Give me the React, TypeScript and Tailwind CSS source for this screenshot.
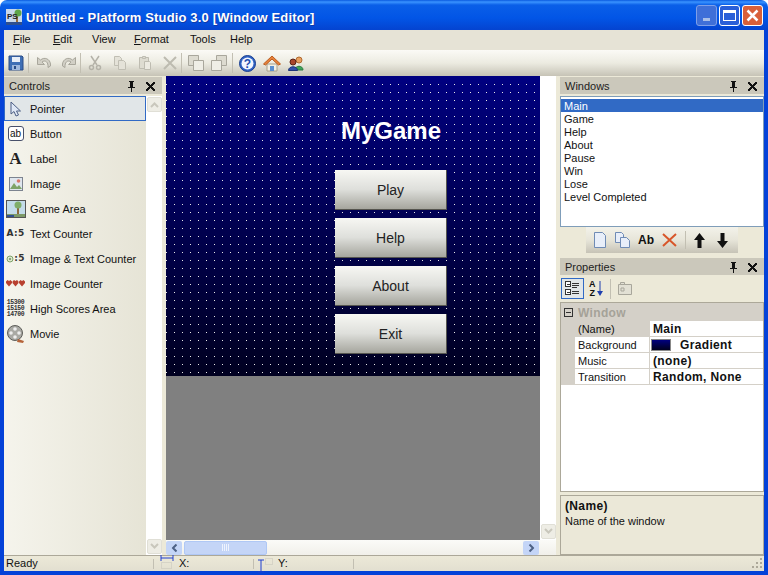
import type { ReactNode } from 'react'

function Svg({ w = 16, h = 16, children }: { w?: number; h?: number; children: ReactNode }) {
  return (
    <svg width={w} height={h} viewBox={`0 0 ${w} ${h}`} className="shrink-0" shapeRendering="crispEdges">
      {children}
    </svg>
  )
}

function PinIcon() {
  return (
    <Svg w={9} h={11}>
      <path d="M2 0h5v1H6v5h2v1H1V6h2V1H2zM4 7h1v4H4z" fill="#111" />
      <path d="M5 1h1v5H5z" fill="#111" />
    </Svg>
  )
}

function CloseIcon() {
  return (
    <Svg w={9} h={9}>
      <path d="M0 0h2l2.500 3L7 0h2v1L6 4.500 9 8v1H7L4.500 6 2 9H0V8l3-3.500L0 1z" fill="#111" />
    </Svg>
  )
}

function PanelHeader({ title }: { title: string }) {
  return (
    <div className="flex h-[17px] items-center bg-[#cbc8bb] pl-[5px] pr-[7px] pt-px text-[#222]">
      <span className="flex-1">{title}</span>
      <span className="mr-[10px]"><PinIcon /></span>
      <CloseIcon />
    </div>
  )
}

function SaveIcon() {
  return (
    <svg width="16" height="16" viewBox="0 0 16 16">
      <path d="M1 1h13l1 1v13H1z" fill="#3f6fb5" stroke="#2a4c86" />
      <rect x="4" y="2" width="8" height="5" fill="#e8eef7" />
      <rect x="4" y="10" width="8" height="5" fill="#9fb8dc" />
      <rect x="6" y="11" width="2" height="3" fill="#2a4c86" />
    </svg>
  )
}

function UndoIcon({ flip }: { flip?: boolean }) {
  return (
    <svg width="16" height="16" viewBox="0 0 16 16" className={flip ? '-scale-x-100' : ''}>
      <path d="M1.500 2.500v7h7L6 7c2.500-2 5.500-1 6 3.500v2l2.500-1.500V9C14 4 8.500 1.500 4.500 5z" fill="#d2d0c6" stroke="#a9a79c" />
    </svg>
  )
}

function CutIcon() {
  return (
    <svg width="16" height="16" viewBox="0 0 16 16" fill="none" stroke="#b4b2a8" strokeWidth="1.500">
      <path d="M4 1l6 9M12 1L6 10" />
      <circle cx="4.500" cy="12.500" r="2" />
      <circle cx="11.500" cy="12.500" r="2" />
    </svg>
  )
}

function CopyIcon() {
  return (
    <svg width="16" height="16" viewBox="0 0 16 16" fill="#e4e2d8" stroke="#c0beb3">
      <path d="M2.500 1.500h5l2 2v7h-7z" />
      <path d="M6.500 5.500h5l2 2v7h-7z" />
    </svg>
  )
}

function PasteIcon() {
  return (
    <svg width="16" height="16" viewBox="0 0 16 16" fill="#dedcd1" stroke="#bebcb1">
      <path d="M2.500 2.500h9v11h-9z" />
      <path d="M5.500 1.500h3v2h-3z" />
      <path d="M7.500 6.500h5l1 1v7h-6z" fill="#eceae1" />
    </svg>
  )
}

function CrossGrayIcon() {
  return (
    <svg width="16" height="16" viewBox="0 0 16 16" stroke="#bdbbb0" strokeWidth="2">
      <path d="M2 2l12 12M14 2L2 14" />
    </svg>
  )
}

function StackIcon({ flip }: { flip?: boolean }) {
  return (
    <svg width="18" height="18" viewBox="0 0 18 18" className={flip ? '-scale-x-100' : ''} stroke="#a9a79c">
      <path d="M1.500 1.500h10v10h-10z" fill="#dddbd0" />
      <path d="M6.500 6.500h10v10h-10z" fill="#efeee6" />
    </svg>
  )
}

function HelpIcon() {
  return (
    <svg width="17" height="17" viewBox="0 0 17 17">
      <circle cx="8.500" cy="8.500" r="8" fill="#2f62c4" stroke="#1b3f8f" />
      <circle cx="8.500" cy="8.500" r="6" fill="#f2f6ff" />
      <text x="8.500" y="13" textAnchor="middle" fontSize="12" fontWeight="700" fill="#1f4fb0" fontFamily="'Liberation Sans',sans-serif">?</text>
    </svg>
  )
}

function HomeIcon() {
  return (
    <svg width="18" height="17" viewBox="0 0 18 17">
      <path d="M4 9h10v7H4z" fill="#f2f0e6" stroke="#a8a08a" />
      <path d="M0.500 9L9 1l8.500 8-2 1L9 4l-6.500 6z" fill="#e8823a" stroke="#b95c20" />
      <path d="M7 11h4v5H7z" fill="#5a8fd0" />
    </svg>
  )
}

function UsersIcon() {
  return (
    <svg width="16" height="15" viewBox="0 0 16 15">
      <circle cx="11" cy="4" r="3" fill="#e8a060" stroke="#b06a30" />
      <path d="M7 14c0-5 8-5 8 0z" fill="#3fa35a" stroke="#2a7a40" />
      <circle cx="5" cy="6" r="3" fill="#a8452c" stroke="#5b2418" />
      <path d="M0.500 14.500c0-5 9-5 9 0z" fill="#2f4fa8" stroke="#1d3478" />
    </svg>
  )
}

function Sep({ h = 'h-[20px]' }: { h?: string }) {
  return <span className={`${h} block w-px shrink-0 bg-[#c2bfb2]`} />
}

function ArrowUp({ color = '#c9c7bc' }: { color?: string }) {
  return (
    <svg width="9" height="6" viewBox="0 0 9 6" fill="none" stroke={color} strokeWidth="2">
      <path d="M1 5l3.500-3.500L8 5" />
    </svg>
  )
}

function ScrollBtn({ down }: { down?: boolean }) {
  return (
    <div className={`flex h-[15px] w-[15px] items-center justify-center rounded-[2px] border border-[#e0dfd6] bg-[#eeede5] ${down ? 'rotate-180' : ''}`}>
      <ArrowUp />
    </div>
  )
}

function PointerIcon() {
  return (
    <svg width="14" height="16" viewBox="0 0 14 16">
      <path d="M2 1v12l3-2.500L7 15l2.500-1-2-4h4z" fill="#dfe8f6" stroke="#4d5f85" />
    </svg>
  )
}

function ButtonIcon() {
  return (
    <div className="flex h-[15px] w-[16px] items-center justify-center rounded-[3px] border border-[#48506a] bg-white text-[10px] leading-none text-[#111]">
      ab
    </div>
  )
}

function ImageIcon() {
  return (
    <svg width="14" height="14" viewBox="0 0 14 14">
      <rect x="0.500" y="0.500" width="13" height="13" fill="#dfe6ee" stroke="#7d8490" />
      <circle cx="9.500" cy="4" r="1.800" fill="#d9786a" />
      <path d="M1 12l4-6 3 4 2-2 3 4z" fill="#7ea368" />
    </svg>
  )
}

function GameAreaIcon() {
  return (
    <svg width="20" height="18" viewBox="0 0 20 18">
      <rect x="0.500" y="0.500" width="19" height="17" fill="#c3dcea" stroke="#555" />
      <path d="M1 14h18v3H1z" fill="#7d9a68" />
      <path d="M1 15h7v2H1z" fill="#2f4f8f" />
      <path d="M11 6h2v8h-2z" fill="#8d6a3c" />
      <circle cx="12" cy="5" r="3.500" fill="#7fae6a" />
    </svg>
  )
}

function ImgCounterDot() {
  return (
    <svg width="8" height="8" viewBox="0 0 8 8">
      <circle cx="4" cy="4" r="3" fill="#dfe8d0" stroke="#7fa36a" />
      <circle cx="4" cy="4" r="1" fill="#6f8f5a" />
    </svg>
  )
}

function Hearts() {
  return (
    <svg width="19" height="7" viewBox="0 0 19 7" fill="#b8402f">
      <path d="M0 1.500L1.500 0 3 1l1.500-1L6 1.500V3L3 6.500 0 3z" />
      <path d="M6.500 1.500L8 0l1.500 1L11 0l1.500 1.500V3l-3 3.500-3-3.500z" />
      <path d="M13 1.500L14.500 0 16 1l1.500-1L19 1.500V3l-3 3.500L13 3z" />
    </svg>
  )
}

function MovieIcon() {
  return (
    <svg width="18" height="18" viewBox="0 0 18 18">
      <circle cx="8" cy="8" r="7.500" fill="#a9a9a4" stroke="#5e5e5a" />
      <circle cx="8" cy="4" r="1.800" fill="#eee" />
      <circle cx="4" cy="8" r="1.800" fill="#eee" />
      <circle cx="12" cy="8" r="1.800" fill="#eee" />
      <circle cx="8" cy="12" r="1.800" fill="#eee" />
      <path d="M11 14l6 2-1 2-6-1z" fill="#b5643a" />
    </svg>
  )
}

const controls: { label: string; icon: ReactNode }[] = [
  { label: 'Button', icon: <ButtonIcon /> },
  { label: 'Label', icon: <span className="font-['Liberation_Serif',serif] text-[17px] font-bold leading-none text-[#222]">A</span> },
  { label: 'Image', icon: <ImageIcon /> },
  { label: 'Game Area', icon: <GameAreaIcon /> },
  { label: 'Text Counter', icon: <span className="font-['DejaVu_Sans',sans-serif] text-[9px] font-bold leading-none tracking-[0.4px] text-[#333]">A:5</span> },
  {
    label: 'Image & Text Counter',
    icon: (
      <span className="flex items-center font-['DejaVu_Sans',sans-serif] text-[9px] font-bold leading-none tracking-[0.4px] text-[#333]">
        <ImgCounterDot />:5
      </span>
    ),
  },
  { label: 'Image Counter', icon: <Hearts /> },
  {
    label: 'High Scores Area',
    icon: (
      <span className="block font-['Liberation_Mono',monospace] text-[6.500px] font-bold leading-[6px] tracking-[-0.4px] text-[#333]">
        15300<br />15150<br />14700
      </span>
    ),
  },
  { label: 'Movie', icon: <MovieIcon /> },
]

const windowNames = ['Game', 'Help', 'About', 'Pause', 'Win', 'Lose', 'Level Completed']

const properties: { name: string; value: string; swatch?: boolean }[] = [
  { name: '(Name)', value: 'Main' },
  { name: 'Background', value: 'Gradient', swatch: true },
  { name: 'Music', value: '(none)' },
  { name: 'Transition', value: 'Random, None' },
]

export default function App() {
  return (
    <div className="flex h-[575px] w-[768px] flex-col overflow-hidden bg-white font-['Liberation_Sans',sans-serif] text-[11px] leading-[13px] text-[#111]">
      {/* Title bar */}
      <header className="flex h-[30px] shrink-0 items-center rounded-t-[7px] bg-[linear-gradient(to_bottom,#0a5ae0_0,#3a93ff_2px,#0a5fe8_5px,#0255e6_60%,#0443d0_100%)] pl-[6px] pr-[5px]">
        <svg width="16" height="16" viewBox="0 0 16 16" className="mr-[4px] mt-[3px]">
          <rect width="16" height="16" fill="#c8d8ec" />
          <path d="M10 4h2v10h-2z" fill="#9a6a35" />
          <circle cx="12" cy="4" r="3.500" fill="#5fa548" />
          <path d="M0 13h16v3H0z" fill="#2f4f8f" />
          <text x="1" y="10" fontSize="8" fontWeight="700" fill="#222" fontFamily="'Liberation Sans',sans-serif">PS</text>
        </svg>
        <span className="mt-[4px] flex-1 text-[13px] font-bold tracking-[0.15px] text-white [text-shadow:1px_1px_#0f3aa8]">
          Untitled - Platform Studio 3.0 [Window Editor]
        </span>
        <div className="flex gap-[2px]">
          <div className="flex h-[21px] w-[21px] items-end justify-center rounded-[3px] border border-[#7f9fe8] bg-[#3f6fd8] pb-[4px]">
            <span className="h-[3px] w-[7px] bg-[#a9bfe8]" />
          </div>
          <div className="flex h-[21px] w-[21px] items-center justify-center rounded-[3px] border border-white bg-[#2a5fd8]">
            <span className="h-[11px] w-[13px] border border-t-[3px] border-white" />
          </div>
          <div className="flex h-[21px] w-[21px] items-center justify-center rounded-[3px] border border-white bg-[#d9603a]">
            <svg width="13" height="13" viewBox="0 0 13 13" stroke="#fff" strokeWidth="2.500">
              <path d="M1.500 1.500l10 10M11.500 1.500l-10 10" />
            </svg>
          </div>
        </div>
      </header>

      <div className="flex min-h-0 flex-1 flex-col border-x-4 border-b-4 border-[#0442d8] bg-[#ece9d8]">
        {/* Menu */}
        <nav className="flex h-[20px] shrink-0 items-center bg-[#e6e3d6] pb-[2px] pl-[9px]">
          <span className="w-[40px]"><u>F</u>ile</span>
          <span className="w-[39px]"><u>E</u>dit</span>
          <span className="w-[42px]">View</span>
          <span className="w-[56px]"><u>F</u>ormat</span>
          <span className="w-[40px]">Tools</span>
          <span>Help</span>
        </nav>

        {/* Toolbar */}
        <div className="flex h-[26px] shrink-0 items-center bg-gradient-to-b from-[#fbfaf6] via-[#ecebe1] to-[#c6c3b6] pl-[4px]">
          <span className="mr-[4px]"><SaveIcon /></span>
          <Sep />
          <div className="ml-[7px] flex items-center gap-[9px]">
            <UndoIcon />
            <UndoIcon flip />
          </div>
          <span className="ml-[3px]"><Sep /></span>
          <div className="ml-[6px] flex items-center gap-[9px]">
            <CutIcon />
            <CopyIcon />
            <PasteIcon />
            <CrossGrayIcon />
          </div>
          <span className="ml-[3px]"><Sep /></span>
          <div className="ml-[5px] flex items-center gap-[5px]">
            <StackIcon />
            <StackIcon flip />
          </div>
          <span className="ml-[4px]"><Sep /></span>
          <div className="ml-[6px] flex items-center gap-[7px]">
            <HelpIcon />
            <HomeIcon />
            <UsersIcon />
          </div>
        </div>

        {/* Body */}
        <div className="flex min-h-0 flex-1">
          {/* Controls panel */}
          <aside className="flex w-[158px] shrink-0 flex-col pt-px">
            <PanelHeader title="Controls" />
            <div className="mt-[2px] flex min-h-0 flex-1">
              <div className="w-[142px] shrink-0 bg-gradient-to-r from-[#f5f4ec] to-[#e6e4d6]">
                <div className="flex h-[25px] items-center border border-[#316ac5] bg-[#e1e6e8]">
                  <span className="mr-[4px] flex w-[21px] justify-center"><PointerIcon /></span>
                  <span className="pt-px">Pointer</span>
                </div>
                {controls.map((control) => (
                  <div key={control.label} className="flex h-[25px] items-center pl-px">
                    <span className="mr-[4px] flex w-[21px] shrink-0 items-center justify-center">{control.icon}</span>
                    <span className="pt-[2px]">{control.label}</span>
                  </div>
                ))}
              </div>
              <div className="flex flex-1 flex-col items-center justify-between bg-white py-px">
                <ScrollBtn />
                <ScrollBtn down />
              </div>
            </div>
          </aside>

          {/* Canvas */}
          <main className="ml-[4px] flex w-[390px] shrink-0 flex-col">
            <div className="flex min-h-0 flex-1">
              <div className="flex w-[374px] shrink-0 flex-col bg-[#808080]">
                <div className="flex h-[300px] w-full flex-col bg-[linear-gradient(#000080,#000080),radial-gradient(circle_at_0.5px_0.5px,#e8e8e8_0.7px,transparent_0.8px),linear-gradient(to_bottom,#000080,#000020)] bg-[length:100%_6px,8px_8px,100%_100%] pl-[169px] pt-[41px] [background-repeat:no-repeat,repeat,no-repeat]">
                  <h1 className="ml-[6px] h-[53px] text-[24px] font-bold leading-[28px] text-white">MyGame</h1>
                  <div className="flex w-[112px] flex-col gap-[8px] text-[14px]">
                    {['Play', 'Help', 'About', 'Exit'].map((label) => (
                      <div
                        key={label}
                        className="flex h-[40px] items-center justify-center border-b border-r border-[#55554f] bg-gradient-to-b from-[#f7f7f3] via-[#dedfdb] to-[#a6a69e] pt-[2px] text-[#222]"
                      >
                        {label}
                      </div>
                    ))}
                  </div>
                </div>
              </div>
              <div className="flex w-[16px] flex-col items-center justify-end bg-white pb-[1px]">
                <ScrollBtn down />
              </div>
            </div>
            {/* Horizontal scrollbar */}
            <div className="flex h-[15px] shrink-0 items-center bg-gradient-to-b from-[#fbfbf8] to-[#f1f0ea]">
              <div className="flex h-[14px] w-[16px] items-center justify-center rounded-[2px] bg-[#c4d5f7]">
                <span className="-rotate-90"><ArrowUp color="#4d6185" /></span>
              </div>
              <div className="ml-[2px] flex h-[14px] w-[83px] items-center justify-center gap-px rounded-[2px] border border-[#b0c8f5] bg-[#c4d5f7]">
                {[0, 1, 2, 3].map((i) => (
                  <span key={i} className="h-[7px] w-px bg-[#eef3fd]" />
                ))}
              </div>
              <span className="flex-1" />
              <div className="mr-[17px] flex h-[14px] w-[16px] items-center justify-center rounded-[2px] bg-[#c4d5f7]">
                <span className="rotate-90"><ArrowUp color="#4d6185" /></span>
              </div>
            </div>
          </main>

          {/* Right panels */}
          <aside className="ml-[4px] flex w-[204px] shrink-0 flex-col pt-px">
            <PanelHeader title="Windows" />
            <div className="mt-[2px] h-[131px] shrink-0 border border-[#7f9db9] bg-white pt-[2px]">
              <div className="h-[13px] bg-[#316ac5] pl-[3px] pt-px text-white">Main</div>
              {windowNames.map((name) => (
                <div key={name} className="h-[13px] pl-[3px] pt-px">{name}</div>
              ))}
            </div>
            <div className="mx-auto flex h-[26px] w-[152px] shrink-0 items-center justify-center gap-[8px] bg-gradient-to-b from-[#f3f2ea] via-[#e7e5d9] to-[#c6c3b6] pr-[3px]">
              <svg width="14" height="16" viewBox="0 0 14 16">
                <path d="M1.500 0.500h8l3 3v12h-11z" fill="#e8eef9" stroke="#6f8bb5" />
              </svg>
              <svg width="15" height="16" viewBox="0 0 15 16" fill="#e8eef9" stroke="#6f8bb5">
                <path d="M0.500 0.500h6l2 2v8h-8z" />
                <path d="M5.500 5.500h6l3 3v7h-9z" />
              </svg>
              <span className="w-[16px] text-center text-[12px] font-bold">Ab</span>
              <svg width="15" height="14" viewBox="0 0 15 14" stroke="#d8562a" strokeWidth="2">
                <path d="M1 1l13 12M14 1L1 13" />
              </svg>
              <Sep h="h-[18px]" />
              <svg width="11" height="15" viewBox="0 0 11 15" fill="#111">
                <path d="M5.500 0L11 7H7.500v8h-4V7H0z" />
              </svg>
              <svg width="11" height="15" viewBox="0 0 11 15" fill="#111" className="ml-[4px]">
                <path d="M5.500 15L11 8H7.500V0h-4v8H0z" />
              </svg>
            </div>
            <div className="mt-[5px]"><PanelHeader title="Properties" /></div>
            <div className="flex h-[27px] shrink-0 items-center pl-px">
              <div className="flex h-[21px] w-[23px] items-center justify-center border border-[#316ac5] bg-[#e1e6e8]">
                <svg width="15" height="15" viewBox="0 0 15 15" fill="none" stroke="#333" shapeRendering="crispEdges">
                  <path d="M0.500 0.500h5v5h-5zM0.500 8.500h5v5h-5z" fill="#fff" />
                  <path d="M7 2h7M7 4h7M7 6h5M7 10h7M7 12h7M1.500 3h3M1.500 11h3" />
                </svg>
              </div>
              <div className="ml-[5px] flex flex-col items-center text-[9px] font-bold">
                <span className="h-[8px] leading-[8px]">A</span>
                <span className="mt-px h-[8px] leading-[8px]">Z</span>
              </div>
              <svg width="6" height="16" viewBox="0 0 6 16" className="ml-px">
                <path d="M3 0v13" stroke="#1f3fae" />
                <path d="M0 10h6l-3 5z" fill="#1f3fae" />
              </svg>
              <span className="ml-[7px]"><Sep /></span>
              <svg width="14" height="13" viewBox="0 0 14 13" className="ml-[7px]" fill="#e2e0d4" stroke="#a8a69b">
                <path d="M0.500 2.500h13v10H0.500z" />
                <path d="M2.500 0.500h4v2h-4zM3 6h3v3H3z" />
              </svg>
            </div>

            {/* Property grid */}
            <div className="flex min-h-0 flex-1 flex-col border border-[#aca899] bg-white">
              <div className="flex h-[18px] shrink-0 items-center bg-[#d4d0c8] pl-[3px]">
                <span className="flex h-[9px] w-[9px] items-center justify-center border border-[#333]">
                  <span className="h-px w-[5px] bg-[#333]" />
                </span>
                <span className="ml-[5px] mt-[2px] text-[12px] font-bold tracking-[0.35px] text-[#a5a298]">Window</span>
              </div>
              {properties.map((prop, i) => (
                <div key={prop.name} className="flex h-[16px] shrink-0 border-b border-[#d4d0c8]">
                  <span className="w-[14px] shrink-0 bg-[#d4d0c8]" />
                  <span className={`flex w-[75px] shrink-0 items-center border-r border-[#d4d0c8] pl-[3px] pt-[2px] ${i === 0 ? 'bg-[#d4d0c8]' : ''}`}>{prop.name}</span>
                  <span className="flex items-center pl-[3px] pt-[2px] text-[12px] font-bold tracking-[0.35px]">
                    {prop.swatch && <span className="-ml-[2px] -mt-[2px] mr-[9px] h-[12px] w-[20px] border border-[#888] bg-gradient-to-b from-[#000080] to-[#000020]" />}
                    {prop.value}
                  </span>
                </div>
              ))}
            </div>

            <div className="mt-[3px] h-[60px] shrink-0 border border-[#aca899] bg-[#ebe8d8] pl-[4px] pt-[3px]">
              <div className="text-[12px] font-bold leading-[14px] tracking-[0.35px]">(Name)</div>
              <div className="mt-[2px]">Name of the window</div>
            </div>
          </aside>
        </div>

        {/* Status bar */}
        <footer className="flex h-[16px] shrink-0 items-center border-t border-[#aca899] bg-gradient-to-b from-[#ece9d8] to-[#e2dfd0]">
          <span className="-mt-px w-[149px] pl-[2px]">Ready</span>
          <Sep h="h-[10px]" />
          <span className="ml-[6px] flex w-[93px] items-center">
            <svg width="14" height="15" viewBox="0 0 14 15" className="-mt-[5px]">
              <path d="M1 4h12M1 1v6M13 1v6" stroke="#1f3fd0" fill="none" />
              <path d="M1.500 8.500h10v6h-10z" stroke="#c5c3b8" strokeDasharray="1 1" fill="none" />
            </svg>
            <span className="ml-[5px]">X:</span>
          </span>
          <Sep h="h-[10px]" />
          <span className="ml-[4px] flex w-[95px] items-center">
            <svg width="15" height="15" viewBox="0 0 15 15" className="mt-[3px]">
              <path d="M3 2v12M0 2h6M0 14h6" stroke="#1f3fd0" fill="none" />
              <path d="M7.500 0.500h7v6h-7z" stroke="#c5c3b8" strokeDasharray="1 1" fill="none" />
            </svg>
            <span className="ml-[5px]">Y:</span>
          </span>
          <Sep h="h-[10px]" />
          <span className="flex-1" />
          <svg width="11" height="11" viewBox="0 0 11 11" fill="#aca899" className="mr-px">
            <path d="M8 0h2v2H8zM4 4h2v2H4zM8 4h2v2H8zM0 8h2v2H0zM4 8h2v2H4zM8 8h2v2H8z" />
          </svg>
        </footer>
      </div>
    </div>
  )
}
